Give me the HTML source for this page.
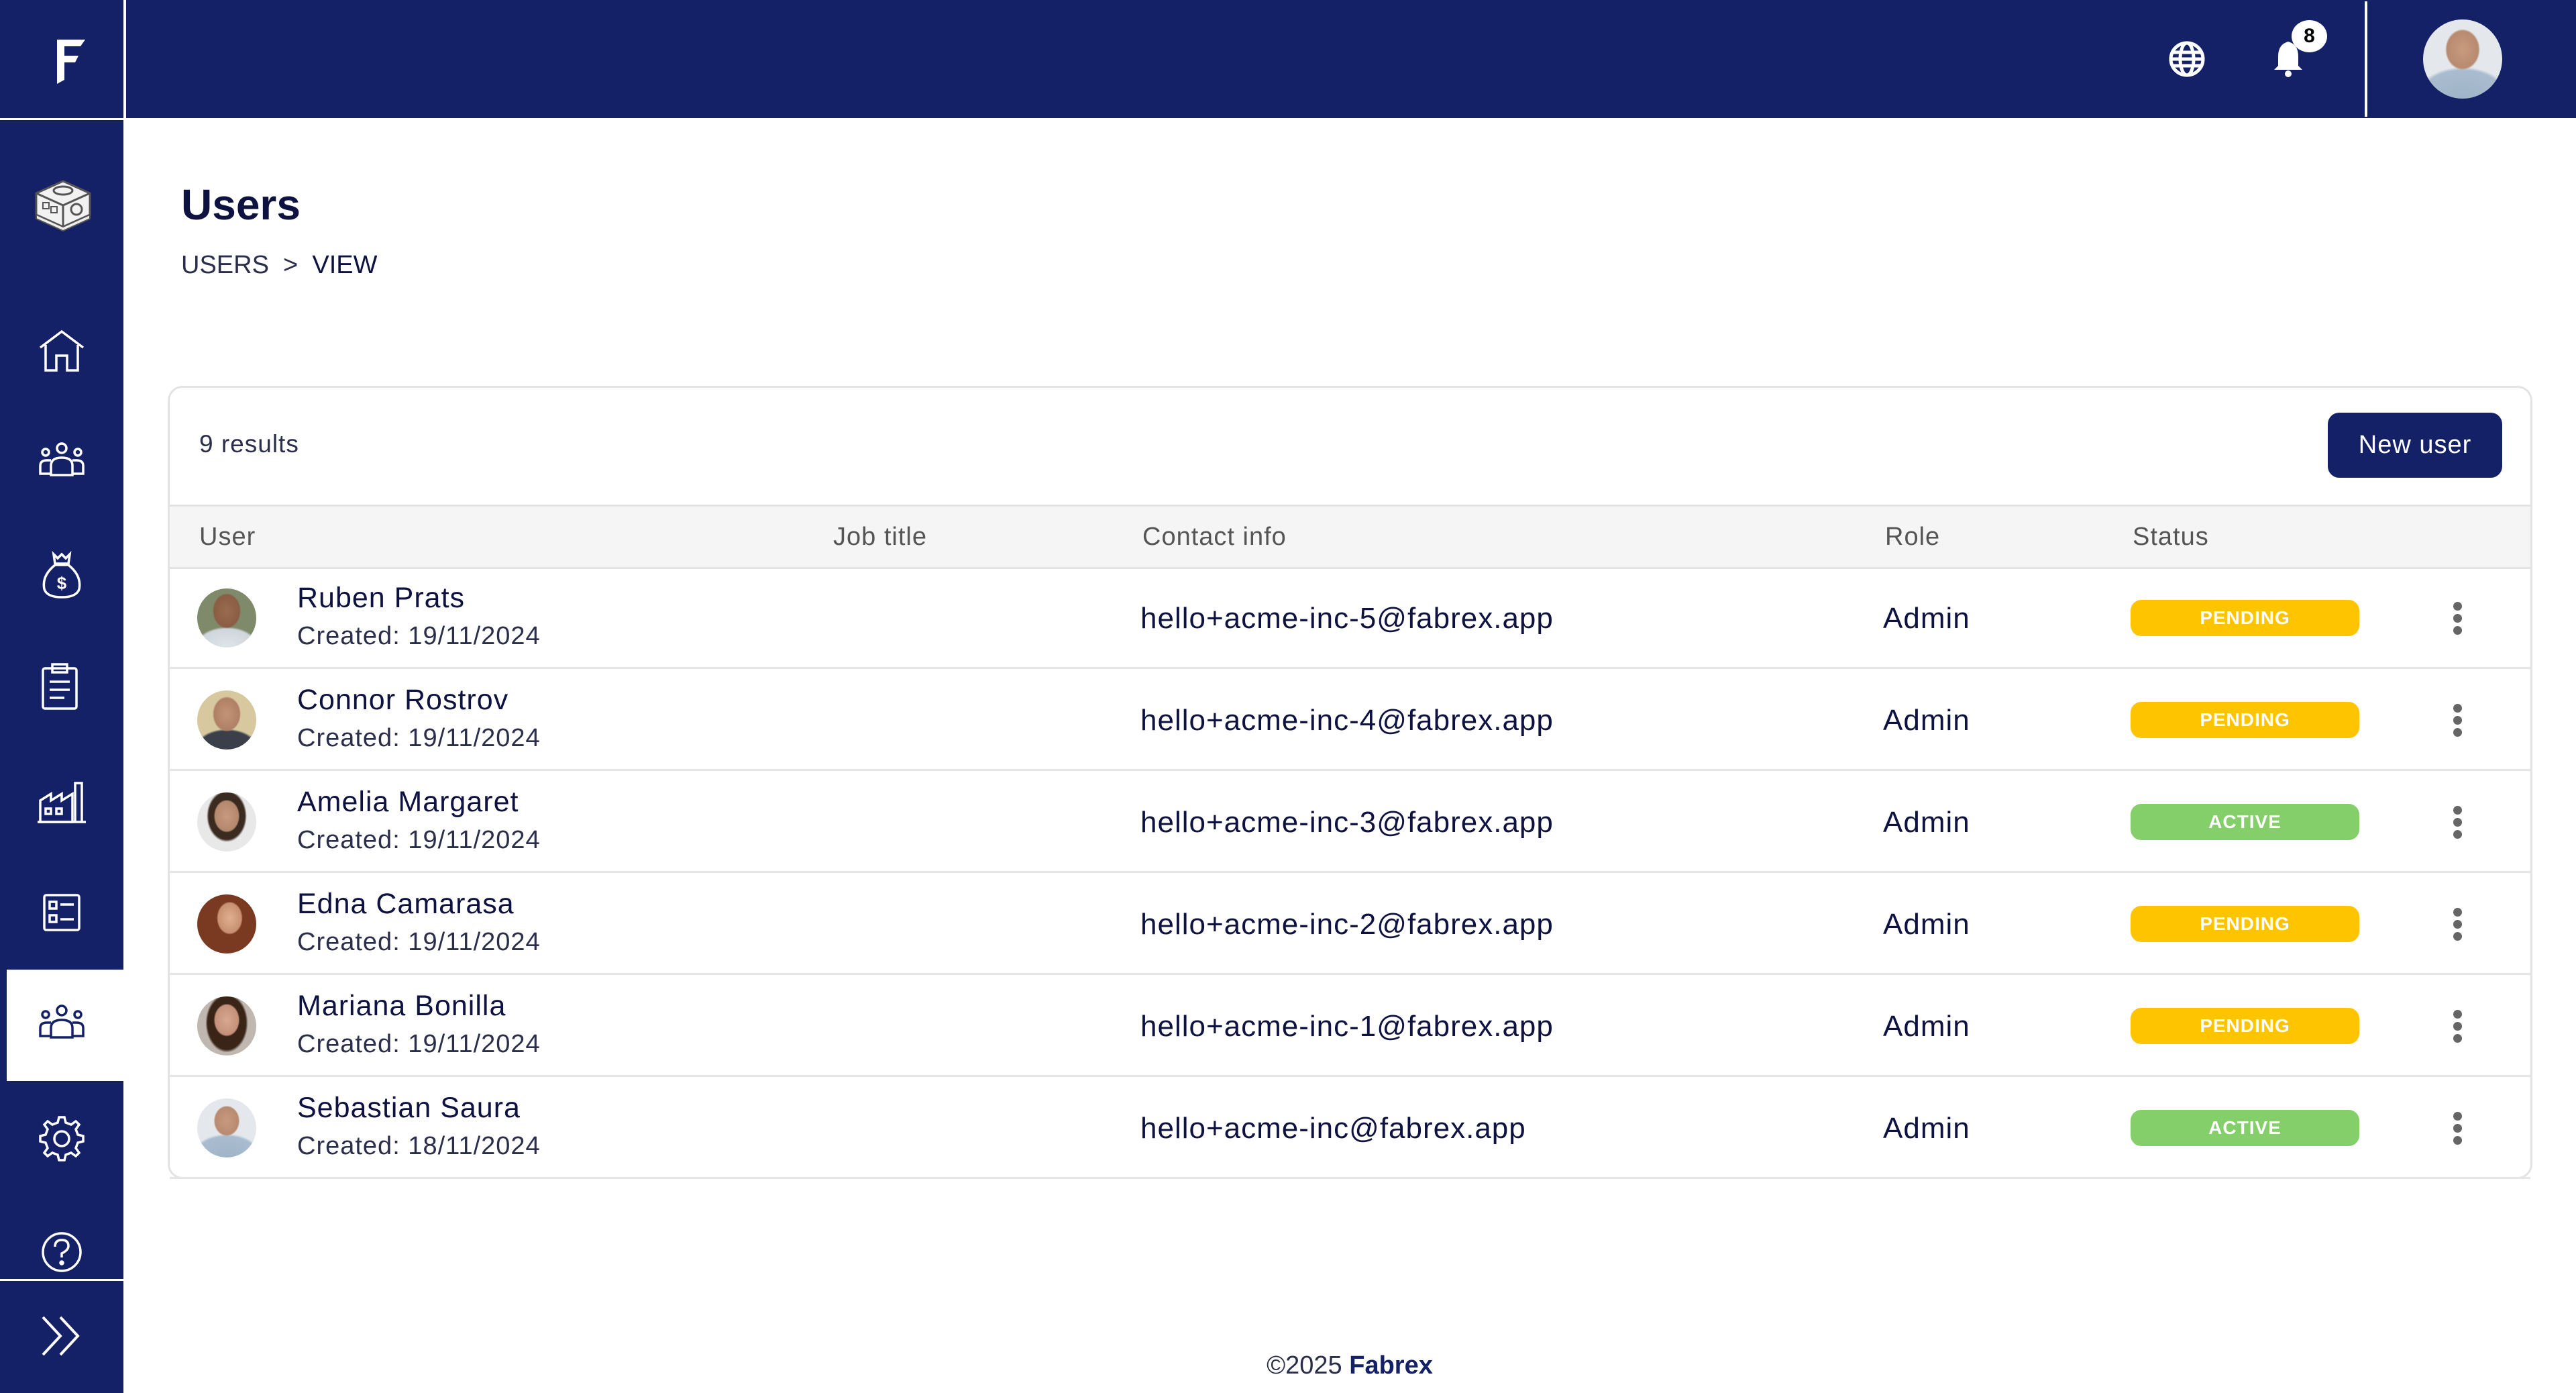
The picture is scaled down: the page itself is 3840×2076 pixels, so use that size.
<!DOCTYPE html>
<html><head><meta charset="utf-8">
<style>
*{margin:0;padding:0;box-sizing:border-box}
body{width:3840px;height:2076px;background:#fff;font-family:"Liberation Sans",sans-serif;position:relative;overflow:hidden;color:#0e1240}
.abs{position:absolute}
.navy{background:#142166}
.ico{position:absolute;left:52px;width:80px;height:80px}
.ico svg{width:80px;height:80px}
.row{position:absolute;left:0;width:100%;height:152px;border-bottom:3px solid #e6e6e6}
.av{position:absolute;left:294px;top:32px;width:88px;height:88px;border-radius:50%}
.nm{position:absolute;left:443px;top:22px;font-size:43px;color:#0e1240;letter-spacing:1px}
.cr{position:absolute;left:443px;top:82px;font-size:38px;color:#2a2e4a;letter-spacing:1px}
.em{position:absolute;left:1700px;top:52px;font-size:44px;color:#0e1240;letter-spacing:1px}
.rl{position:absolute;left:2807px;top:52px;font-size:44px;color:#0e1240;letter-spacing:1px}
.bd{position:absolute;left:3176px;top:49px;width:341px;height:54px;border-radius:16px;color:#fff;font-weight:bold;font-size:28px;text-align:center;line-height:54px;letter-spacing:1px}
.p{background:#ffc400}.a{background:#84cf6a}
.dots{position:absolute;left:3657px;top:52px;width:16px}
.dots i{display:block;width:13px;height:13px;border-radius:50%;background:#666;margin-bottom:5px}
</style></head><body>
<div class="abs navy" style="left:0;top:0;width:3840px;height:176px"></div>
<div class="abs" style="left:184px;top:0;width:4px;height:176px;background:#fff"></div>
<div class="abs" style="left:0;top:176px;width:184px;height:3px;background:#fff"></div>
<svg class="abs" style="left:85px;top:59px" width="42" height="66" viewBox="0 0 42 66"><path d="M0 0H42L35 10H11V24H32L27 34H11V60L0 66Z" fill="#fff"/></svg>
<div class="abs navy" style="left:0;top:179px;width:184px;height:1897px"></div>
<div class="abs" style="left:0;top:1906px;width:184px;height:3px;background:#fff"></div>
<div class="abs" style="left:10px;top:1445px;width:174px;height:166px;background:#fff"></div>
<svg class="abs" style="left:52px;top:258px" width="84" height="90" viewBox="0 0 84 90"><path d="M2 30L42 12L82 30V62L42 80L2 62Z" fill="#f2f2f2" stroke="#555" stroke-width="3"/><path d="M2 62L42 80L82 62V68L42 86L2 68Z" fill="#eee" stroke="#555" stroke-width="2"/><path d="M2 30L42 48L82 30M42 48V80" stroke="#555" stroke-width="3" fill="none"/><ellipse cx="42" cy="26" rx="14" ry="6" fill="none" stroke="#555" stroke-width="3"/><circle cx="62" cy="54" r="8" fill="none" stroke="#555" stroke-width="3"/><rect x="12" y="44" width="9" height="9" fill="none" stroke="#555" stroke-width="2"/><rect x="24" y="50" width="9" height="9" fill="none" stroke="#555" stroke-width="2"/></svg>
<div class="ico" style="top:484px"><svg viewBox="0 0 80 80" fill="none" stroke="#fff" stroke-width="3.5"><path d="M8 34L40 10L72 34M16 30V68H32V46H48V68H64V30"/></svg></div>
<div class="ico" style="top:650px"><svg viewBox="0 0 80 80" fill="none" stroke="#fff" stroke-width="3.5"><circle cx="40" cy="18" r="7"/><circle cx="16" cy="24" r="5"/><circle cx="64" cy="24" r="5"/><path d="M24 58V44Q24 32 40 32Q56 32 56 44V58Z"/><path d="M24 56H8V44Q8 36 18 36H24M56 56H72V44Q72 36 62 36H56"/></svg></div>
<div class="ico" style="top:818px"><svg viewBox="0 0 80 80" fill="none" stroke="#fff" stroke-width="3.5"><path d="M28 8L34 14L40 8L46 14L52 8L50 22H30Z"/><path d="M30 24Q10 40 14 60Q18 72 40 72Q62 72 66 60Q70 40 50 24Z"/><text x="40" y="60" font-size="26" fill="#fff" stroke="none" text-anchor="middle" font-family="Liberation Sans" font-weight="bold">$</text></svg></div>
<div class="ico" style="top:984px"><svg viewBox="0 0 80 80" fill="none" stroke="#fff" stroke-width="3.5"><rect x="12" y="12" width="50" height="60" rx="3"/><rect x="26" y="6" width="22" height="12"/><path d="M22 32H52M22 44H52M22 56H44"/></svg></div>
<div class="ico" style="top:1153px"><svg viewBox="0 0 80 80" fill="none" stroke="#fff" stroke-width="3.5"><path d="M8 72V40L24 30V40L40 30V40L56 30V72Z"/><path d="M60 72V14H70V72M4 72H76"/><rect x="16" y="52" width="8" height="8"/><rect x="32" y="52" width="8" height="8"/></svg></div>
<div class="ico" style="top:1320px"><svg viewBox="0 0 80 80" fill="none" stroke="#fff" stroke-width="3.5"><rect x="14" y="14" width="52" height="52" rx="3"/><rect x="22" y="24" width="10" height="10"/><rect x="22" y="44" width="10" height="10"/><path d="M38 28H58M38 50H58"/></svg></div>
<div class="ico" style="top:1488px"><svg viewBox="0 0 80 80" fill="none" stroke="#142166" stroke-width="3.5"><circle cx="40" cy="18" r="7"/><circle cx="16" cy="24" r="5"/><circle cx="64" cy="24" r="5"/><path d="M24 58V44Q24 32 40 32Q56 32 56 44V58Z"/><path d="M24 56H8V44Q8 36 18 36H24M56 56H72V44Q72 36 62 36H56"/></svg></div>
<div class="ico" style="top:1657px"><svg viewBox="0 0 80 80" fill="none" stroke="#fff" stroke-width="3.5"><circle cx="40" cy="40" r="11"/><path d="M36 8H44L46 16L54 19L61 14L66 19L61 26L64 34L72 36V44L64 46L61 54L66 61L61 66L54 61L46 64L44 72H36L34 64L26 61L19 66L14 61L19 54L16 46L8 44V36L16 34L19 26L14 19L19 14L26 19L34 16Z"/></svg></div>
<div class="ico" style="top:1826px"><svg viewBox="0 0 80 80" fill="none" stroke="#fff" stroke-width="3.5"><circle cx="40" cy="40" r="28"/><path d="M30 32Q30 22 40 22Q50 22 50 31Q50 37 40 42V48"/><circle cx="40" cy="56" r="2" fill="#fff"/></svg></div>
<div class="ico" style="top:1951px"><svg viewBox="0 0 80 80" fill="none" stroke="#fff" stroke-width="4"><path d="M12 12L38 40L12 68M38 12L64 40L38 68"/></svg></div>
<svg class="abs" style="left:3232px;top:60px" width="56" height="56" viewBox="0 0 56 56" fill="none" stroke="#fff" stroke-width="5"><circle cx="28" cy="28" r="24"/><ellipse cx="28" cy="28" rx="10" ry="24"/><path d="M4 28H52M7 18H49M7 38H49"/></svg>
<svg class="abs" style="left:3386px;top:58px" width="50" height="60" viewBox="0 0 50 60"><path d="M25 4Q10 8 10 26V40L4 46H46L40 40V26Q40 8 25 4Z" fill="#fff"/><circle cx="25" cy="52" r="5" fill="#fff"/></svg>
<div class="abs" style="left:3416px;top:30px;width:53px;height:48px;border-radius:50%;background:#fff;color:#000;font-weight:bold;font-size:30px;text-align:center;line-height:48px">8</div>
<div class="abs" style="left:3525px;top:2px;width:4px;height:172px;background:#fff"></div>
<div class="abs" style="left:3612px;top:29px;width:118px;height:118px;border-radius:50%;background:radial-gradient(ellipse 22% 26% at 50% 38%,#c89a7e 0,#b88a70 90%,transparent 100%),radial-gradient(ellipse 60% 40% at 50% 100%,#9fb4c8 0,#a9bcd0 90%,transparent 100%),#e4e8ec"></div>
<div class="abs" style="left:270px;top:268px;font-size:64px;font-weight:bold;color:#0e1240">Users</div>
<div class="abs" style="left:270px;top:374px;font-size:38px;color:#2a2e4a">USERS&nbsp;&nbsp;&gt;&nbsp;&nbsp;<span style="color:#0e1240">VIEW</span></div>
<div class="abs" style="left:250px;top:575px;width:3525px;height:1182px;border:3px solid #e3e3e3;border-radius:22px;overflow:hidden">
  <div class="abs" style="left:44px;top:63px;font-size:37px;color:#2a2e4a;letter-spacing:1px">9 results</div>
  <div class="abs" style="left:3217px;top:37px;width:260px;height:97px;border-radius:17px;background:#142166;color:#fff;font-size:38px;text-align:center;line-height:97px;letter-spacing:1px">New user</div>
  <div class="abs" style="left:0;top:174px;width:100%;height:96px;background:#f5f5f5;border-top:3px solid #e3e3e3;border-bottom:3px solid #e3e3e3;font-size:38px;color:#555;letter-spacing:1px">
    <span class="abs" style="left:44px;top:24px">User</span>
    <span class="abs" style="left:989px;top:24px">Job title</span>
    <span class="abs" style="left:1450px;top:24px">Contact info</span>
    <span class="abs" style="left:2557px;top:24px">Role</span>
    <span class="abs" style="left:2926px;top:24px">Status</span>
  </div>
</div>
<div class="abs" style="left:253px;top:845px;width:3519px;height:912px">
<div class="row" style="top:0"><div class="av" style="left:41px;background:radial-gradient(ellipse 24% 30% at 50% 38%,#9b6b4e 0,#8a5d44 90%,transparent 100%),radial-gradient(ellipse 55% 35% at 50% 100%,#dfe6ea 0,#cfd6dc 90%,transparent 100%),#7e8a6a"></div><div class="nm" style="left:190px">Ruben Prats</div><div class="cr" style="left:190px">Created: 19/11/2024</div><div class="em" style="left:1447px">hello+acme-inc-5@fabrex.app</div><div class="rl" style="left:2554px">Admin</div><div class="bd p" style="left:2923px">PENDING</div><div class="dots" style="left:3404px"><i></i><i></i><i></i></div></div>
<div class="row" style="top:152px"><div class="av" style="left:41px;background:radial-gradient(ellipse 24% 30% at 50% 40%,#c49478 0,#b08066 90%,transparent 100%),radial-gradient(ellipse 55% 35% at 50% 100%,#3a3f4a 0,#3a3f4a 90%,transparent 100%),#d8c8a0"></div><div class="nm" style="left:190px">Connor Rostrov</div><div class="cr" style="left:190px">Created: 19/11/2024</div><div class="em" style="left:1447px">hello+acme-inc-4@fabrex.app</div><div class="rl" style="left:2554px">Admin</div><div class="bd p" style="left:2923px">PENDING</div><div class="dots" style="left:3404px"><i></i><i></i><i></i></div></div>
<div class="row" style="top:304px"><div class="av" style="left:41px;background:radial-gradient(ellipse 22% 28% at 50% 40%,#c89a80 0,#b4886c 90%,transparent 100%),radial-gradient(ellipse 34% 44% at 50% 40%,#3a2a20 0,#3a2a20 90%,transparent 100%),#e8e8e8"></div><div class="nm" style="left:190px">Amelia Margaret</div><div class="cr" style="left:190px">Created: 19/11/2024</div><div class="em" style="left:1447px">hello+acme-inc-3@fabrex.app</div><div class="rl" style="left:2554px">Admin</div><div class="bd a" style="left:2923px">ACTIVE</div><div class="dots" style="left:3404px"><i></i><i></i><i></i></div></div>
<div class="row" style="top:456px"><div class="av" style="left:41px;background:radial-gradient(ellipse 22% 28% at 55% 40%,#e0b090 0,#c89070 90%,transparent 100%),#7a3a22"></div><div class="nm" style="left:190px">Edna Camarasa</div><div class="cr" style="left:190px">Created: 19/11/2024</div><div class="em" style="left:1447px">hello+acme-inc-2@fabrex.app</div><div class="rl" style="left:2554px">Admin</div><div class="bd p" style="left:2923px">PENDING</div><div class="dots" style="left:3404px"><i></i><i></i><i></i></div></div>
<div class="row" style="top:608px"><div class="av" style="left:41px;background:radial-gradient(ellipse 22% 28% at 50% 40%,#d8a890 0,#c49078 90%,transparent 100%),radial-gradient(ellipse 36% 50% at 50% 45%,#3a2418 0,#3a2418 90%,transparent 100%),#c0b8b0"></div><div class="nm" style="left:190px">Mariana Bonilla</div><div class="cr" style="left:190px">Created: 19/11/2024</div><div class="em" style="left:1447px">hello+acme-inc-1@fabrex.app</div><div class="rl" style="left:2554px">Admin</div><div class="bd p" style="left:2923px">PENDING</div><div class="dots" style="left:3404px"><i></i><i></i><i></i></div></div>
<div class="row" style="top:760px"><div class="av" style="left:41px;background:radial-gradient(ellipse 22% 26% at 50% 38%,#c89a7e 0,#b88a70 90%,transparent 100%),radial-gradient(ellipse 60% 40% at 50% 100%,#9fb4c8 0,#a9bcd0 90%,transparent 100%),#e4e8ec"></div><div class="nm" style="left:190px">Sebastian Saura</div><div class="cr" style="left:190px">Created: 18/11/2024</div><div class="em" style="left:1447px">hello+acme-inc@fabrex.app</div><div class="rl" style="left:2554px">Admin</div><div class="bd a" style="left:2923px">ACTIVE</div><div class="dots" style="left:3404px"><i></i><i></i><i></i></div></div>
</div>
<div class="abs" style="left:184px;width:3656px;top:2014px;text-align:center;font-size:38px;color:#2a2e4a">©2025 <span style="color:#142166;font-weight:bold">Fabrex</span></div>
</body></html>
